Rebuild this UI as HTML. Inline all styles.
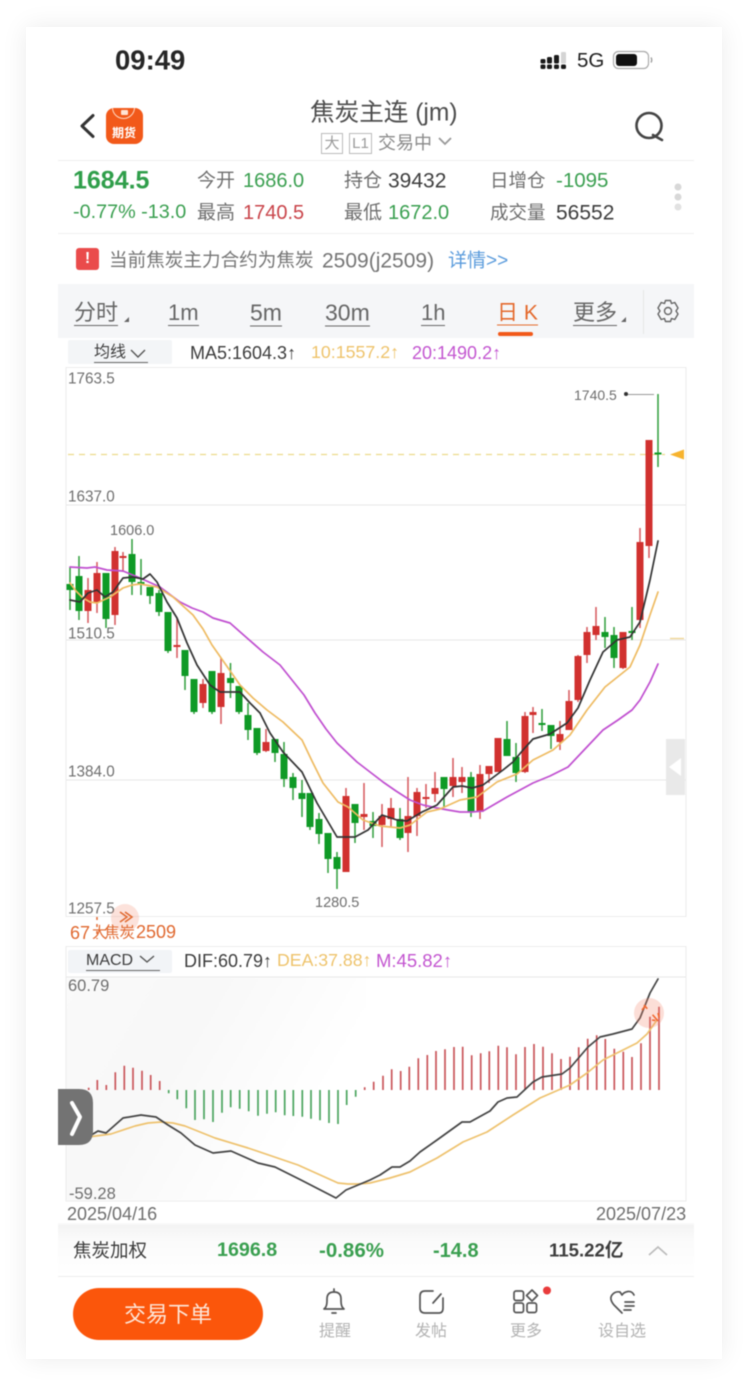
<!DOCTYPE html>
<html lang="zh">
<head>
<meta charset="utf-8">
<title>焦炭主连</title>
<style>
html,body{margin:0;padding:0;background:#fff}
body{width:748px;height:1385px;position:relative;overflow:hidden;font-family:"Liberation Sans","Noto Sans CJK SC",sans-serif;color:#444}
#card{position:absolute;left:26px;top:27px;width:696px;height:1332px;background:#fff;box-shadow:0 0 24px rgba(0,0,0,.08)}
#app{position:absolute;left:0;top:0;width:748px;height:1385px;filter:blur(.45px)}
.t{position:absolute;white-space:nowrap;line-height:1;transform:translateY(calc(-50% + 1px))}
.b{position:absolute}
.g{color:#3a9f50}.r{color:#c9444a}.k{color:#3d3d3d}.y{color:#eec36b}.p{color:#c355d0}.o{color:#e0682f}.m{color:#6e6e6e}
.u{border-bottom:1.5px solid #666;padding-bottom:1px;top:313px}
svg{position:absolute;left:0;top:0}
</style>
</head>
<body>
<div id="card"></div>
<div id="app">
<!-- backgrounds -->
<div class="b" style="left:58px;top:284px;width:636px;height:54px;background:#f5f6f8"></div>
<div class="b" style="left:58px;top:160px;width:636px;height:1px;background:#eeeeee"></div>
<div class="b" style="left:58px;top:233px;width:636px;height:1px;background:#f0f0f0"></div>
<div class="b" style="left:643px;top:290px;width:1px;height:44px;background:#e6e6e6"></div>
<div class="b" style="left:68px;top:340px;width:104px;height:24px;background:#f3f5f7;border-radius:2px"></div>
<div class="b" style="left:68px;top:950px;width:104px;height:23px;background:#f2f4f7;border-radius:2px"></div>
<div class="b" style="left:66px;top:978px;width:300px;height:222px;background:linear-gradient(120deg,#fafafa,#f8f8f8 35%,#fff 75%)"></div>
<div class="b" style="left:58px;top:1226px;width:636px;height:50px;background:linear-gradient(#f4f4f4,#fbfbfb 30%,#fff)"></div>
<div class="b" style="left:58px;top:1276px;width:636px;height:1px;background:#ededed"></div>
<div class="b" style="left:58px;top:1222px;width:636px;height:4px;background:linear-gradient(rgba(0,0,0,0),rgba(0,0,0,.05))"></div>

<!-- status bar -->
<span class="t" style="left:115px;top:59px;font-size:27.5px;font-weight:700;color:#262626">09:49</span>
<span class="t" style="left:577px;top:60px;font-size:20.5px;color:#222">5G</span>

<!-- header -->
<span class="t" style="left:310px;top:113px;font-size:24.6px;color:#4d4d4d">焦炭主连 (jm)</span>
<span class="t" style="left:378px;top:142px;font-size:18px;color:#8a8a8a">交易中</span>
<span class="b" style="left:321px;top:133px;width:20px;height:19px;border:1px solid #bbb;font-size:15px;line-height:19px;text-align:center;color:#999">大</span>
<span class="b" style="left:349px;top:133px;width:21px;height:19px;border:1px solid #bbb;font-size:15px;line-height:19px;text-align:center;color:#999">L1</span>
<div class="b" style="left:106px;top:108px;width:37px;height:36px;border-radius:8px;background:#f2591a;overflow:hidden">
  <div class="b" style="left:6px;top:-12px;width:21px;height:21px;border:1.5px solid #ffd9c4;border-radius:50%"></div>
  <div class="b" style="left:15px;top:2px;width:7px;height:5px;background:#ffe3d4;border-radius:1px"></div>
  <span class="t" style="left:6px;top:24px;font-size:12px;font-weight:700;color:#fff;letter-spacing:0">期货</span>
</div>

<!-- quote rows -->
<span class="t g" style="left:73px;top:179.500px;font-size:25px;font-weight:700;color:#2f9e4a">1684.5</span>
<span class="t m" style="left:197px;top:180px;font-size:19px">今开</span>
<span class="t g" style="left:243px;top:180px;font-size:20px">1686.0</span>
<span class="t m" style="left:344px;top:180px;font-size:19px">持仓</span>
<span class="t k" style="left:388px;top:180px;font-size:21px">39432</span>
<span class="t m" style="left:490px;top:180px;font-size:18.500px">日增仓</span>
<span class="t g" style="left:556px;top:180px;font-size:20.500px">-1095</span>
<span class="t g" style="left:73px;top:212px;font-size:19.800px">-0.77% -13.0</span>
<span class="t m" style="left:197px;top:212px;font-size:19px">最高</span>
<span class="t r" style="left:243px;top:212px;font-size:20px">1740.5</span>
<span class="t m" style="left:344px;top:212px;font-size:19px">最低</span>
<span class="t g" style="left:388px;top:212px;font-size:20px">1672.0</span>
<span class="t m" style="left:490px;top:212px;font-size:18.500px">成交量</span>
<span class="t k" style="left:556px;top:212px;font-size:21px">56552</span>

<!-- notice -->
<div class="b" style="left:76px;top:248px;width:23px;height:22px;background:#ea4b4b;border-radius:3px;color:#fff;font-size:16px;font-weight:700;line-height:22px;text-align:center">!</div>
<span class="t" style="left:109px;top:259.500px;font-size:18.600px;color:#757575">当前焦炭主力合约为焦炭</span>
<span class="t" style="left:322px;top:259.500px;font-size:21px;color:#757575">2509(j2509)</span>
<span class="t" style="left:448px;top:259.500px;font-size:19px;color:#5a9bdc">详情&gt;&gt;</span>

<!-- tabs -->
<span class="t m u" style="left:74px;font-size:22px;color:#666">分时</span>
<span class="t m u" style="left:168px;font-size:22px;color:#666">1m</span>
<span class="t m u" style="left:250px;font-size:23px;color:#666">5m</span>
<span class="t m u" style="left:325px;font-size:23px;color:#666">30m</span>
<span class="t m u" style="left:421px;font-size:22px;color:#666">1h</span>
<span class="t u" style="left:497px;font-size:21px;color:#e4692c;border-color:#e4692c">日 K</span>
<span class="t m u" style="left:573px;font-size:22px;color:#666">更多</span>
<div class="b" style="left:498px;top:332px;width:35px;height:4px;border-radius:2px;background:#f2591a"></div>

<!-- legend -->
<span class="t k u" style="left:94px;top:353px;font-size:16px;border-width:1px;padding-bottom:1px">均线&nbsp;&nbsp;&nbsp;&nbsp;&nbsp;</span>
<span class="t k" style="left:190px;top:352px;font-size:18px">MA5:1604.3↑</span>
<span class="t y" style="left:311px;top:352px;font-size:17.800px">10:1557.2↑</span>
<span class="t p" style="left:412px;top:352px;font-size:18px">20:1490.2↑</span>

<!-- chart labels -->
<span class="t m" style="left:68px;top:378px;font-size:15.300px">1763.5</span>
<span class="t m" style="left:68px;top:496px;font-size:15.300px">1637.0</span>
<span class="t m" style="left:68px;top:633px;font-size:15.300px">1510.5</span>
<span class="t m" style="left:68px;top:771px;font-size:15.300px">1384.0</span>
<span class="t m" style="left:68px;top:908px;font-size:15.300px">1257.5</span>
<span class="t m" style="left:110px;top:530px;font-size:14.500px">1606.0</span>
<span class="t m" style="left:315px;top:902px;font-size:14.500px">1280.5</span>
<span class="t m" style="left:574px;top:394px;font-size:14px">1740.5</span>

<!-- main chart and icons -->
<svg width="748" height="1385" viewBox="0 0 748 1385" fill="none">
  <!-- status icons -->
  <g fill="#1a1a1a">
    <rect x="540.500" y="59" width="5" height="4.500" rx="1.500"/><rect x="540.500" y="64.500" width="5" height="4.500" rx="1.500"/>
    <rect x="547" y="57" width="5" height="6.500" rx="1.500"/><rect x="547" y="64.500" width="5" height="4.500" rx="1.500"/>
    <rect x="554" y="55" width="5" height="8.500" rx="1.500"/><rect x="554" y="64.500" width="5" height="4.500" rx="1.500"/>
    <rect x="561" y="64.500" width="5" height="4.500" rx="1.500"/>
  </g>
  <rect x="561" y="52" width="5" height="11.500" rx="1" fill="#d4d4d4"/>
  <rect x="613.500" y="51.500" width="35" height="17" rx="5" stroke="#aaa" stroke-width="1.200"/>
  <rect x="616" y="54" width="21" height="12" rx="3" fill="#111"/>
  <path d="M651 57.500q1.500 2.500 0 5" stroke="#999" stroke-width="1.300"/>
  <!-- header icons -->
  <path d="M93 115.500L82 126l11 10.500" stroke="#333" stroke-width="3" stroke-linejoin="round" stroke-linecap="round"/>
  <circle cx="649" cy="125.500" r="12.500" stroke="#444" stroke-width="2.600"/>
  <path d="M653 135l9 5" stroke="#444" stroke-width="2.600" stroke-linecap="round"/>
  <path d="M439 138l6 6 6-6" stroke="#999" stroke-width="1.800"/>
  <!-- quote dots -->
  <circle cx="678" cy="187" r="3.500" fill="#d8d8d8"/><circle cx="678" cy="197" r="3.500" fill="#d8d8d8"/><circle cx="678" cy="207" r="3.500" fill="#e2e2e2"/>
  <!-- tab marks -->
  <path d="M124 322l5-5v5zM621 322l5-5v5z" fill="#666"/>
  <g transform="translate(668 311)" stroke="#666" stroke-width="1.400" stroke-linejoin="round">
    <path d="M-2.500-10.500H2.500L3.500-7.500L6.800-8.500L10-3L8 0L10 3L6.800 8.500L3.500 7.500L2.500 10.500H-2.500L-3.500 7.500L-6.800 8.500L-10 3L-8 0L-10-3L-6.800-8.500L-3.500-7.500Z"/>
    <circle r="3.500"/>
  </g>
  <path d="M131 350l7 7 7-7" stroke="#555" stroke-width="1.400"/>
  <path d="M140 956l7 6 7-6" stroke="#555" stroke-width="1.400"/>
  <!-- frames -->
  <rect x="66" y="367.500" width="620" height="549" stroke="#ececec"/>
  <rect x="66" y="946.500" width="620" height="254.500" stroke="#ececec"/>
  <path d="M66 505H686M66 640H686M66 780H686M66 977H686" stroke="#e6e6e6"/>
  <path d="M68 454.500H665" stroke="#ecd98a" stroke-width="1.200" stroke-dasharray="6 5"/>
  <path d="M670 454.500l14-5v10z" fill="#f7b32e"/>
  <path d="M670 638.500h14" stroke="#eed28f" stroke-width="1.300"/>
  <path d="M626 394.500h28" stroke="#999" stroke-width="1"/><circle cx="626" cy="394" r="2" fill="#333"/>
  <!-- wicks green -->
  <path stroke="#2f9e3a" stroke-width="1.500" d="M70 567V610M79 556V620M106 573V628M132 539V595M141 559V595M150 587V604M159 590V616M168 612V653M185 650V690M194 679V714M212 671V714M230.500 663V698M239 686V714M248 703V740M257 728V755M275 739V762M284 742V787M293 773V800M302 780V817M310 793V830M319 813V844M328 833V873M337 852V889M355 804V843M373 812V838M400 808V840M444 777V808M471 772V817M507 721V756M516 743V782M542 709V731M551 725V749M605 617V648M614 627V668M632 607V640M658 394V467"/>
  <!-- wicks red -->
  <path stroke="#d5565b" stroke-width="1.500" d="M88 578V623M97 562V613M115 547V625M123 552V572M177 618V658M203 679V708M221 658V724M266 729V752M346 788V872M364 783V830M382 804V847M391 798V827M408 777V852M417 788V836M426 784V808M435 772V802M453 758V797M462 767V793M480 765V819M489 766V783M525 712V773M533 707V733M560 721V750M569 690V730M578 655V702M587 627V663M596 607V640M623 632V669M640 528V628M649 440V558"/>
  <!-- bodies green -->
  <path stroke="#0f9a26" stroke-width="7" d="M70 584V590M79 576V611M106 573V619M132 554V582M141 582V585M150 587V596M159 593V612M168 612V651M185 650V676M194 679V712M212 671V712M230.500 678V683M239 686V712M248 715V730M257 728V753M275 739V753M284 754V779M293 777V788M302 793V799M310 793V827M319 819V834M328 833V859M337 857V869M355 804V823M373 821V826M400 819V838M444 777V789M471 777V812M507 739V756M516 757V773M542 723V725M551 725V736M605 632V637M614 635V658M632 631V633M658 452.500V454.500"/>
  <!-- bodies red -->
  <path stroke="#d1312f" stroke-width="7" d="M88 590V611M97 573V602M115 551V615M123 556V558M177 645V647M203 684V703M221 673V707M266 742V751M346 796V872M364 814V817M382 816V825M391 808V819M408 816V833M417 792V816M426 797V799M435 788V794M453 777V786M462 777V782M480 774V812M489 766V774M498 738V772M525 716V772M533 712V715M560 734V742M569 701V730M578 656V700M587 632V655M596 626V635M623 632V668M640 542V620M649 440V546"/>
  <!-- MA lines -->
  <g stroke-width="1.700" stroke-linejoin="round" stroke-linecap="round">
    <polyline stroke="#c04fd0" points="70,567 87,568 95,567 107,570 123,571 140,578 160,587 180,602 192,608 203,612 213,618 230,623 247,638 263,652 280,665 292,680 304,695 315,713 326,729 337,743 357,762 370,772 383,782 396,791 410,800 423,805 437,808 448,810 460,812 472,812 483,811 495,804 507,797 520,790 533,783 550,776 568,767 585,749 603,730 618,720 632,710 640,700 650,682 658,664"/>
    <polyline stroke="#eebb62" points="70,583 76,591 83,598 90,602 97,603 110,597 123,588 132,585 140,584 157,587 173,597 193,615 203,629 212,645 226,665 240,685 253,698 267,710 283,722 302,740 312,761 323,783 338,802 348,807 363,820 380,826 400,828 410,825 427,812 440,809 460,800 477,797 497,782 517,774 533,760 553,750 570,735 587,710 605,687 630,667 640,645 650,615 658,592"/>
    <polyline stroke="#333" points="70,600 80,602 88,593 97,590 105,597 113,592 123,578 133,577 143,579 150,574 157,582 167,602 177,618 187,643 197,665 210,685 220,692 240,692 250,703 260,713 270,733 283,752 302,772 317,803 337,837 355,837 368,830 382,815 397,820 407,821 422,812 437,805 453,787 462,786 472,788 483,785 503,770 513,762 523,750 533,739 550,734 567,723 578,708 590,680 603,652 617,640 630,637 640,622 650,580 658,541"/>
  </g>
  <!-- side handle -->
  <rect x="666" y="739" width="19" height="56" fill="#e9e9e9"/>
  <path d="M669 767l12-9v18z" fill="#fff"/>
  <!-- MACD bars -->
  <path stroke="#c9555a" stroke-width="1.700" d="M88.700 1090V1087.700M97.300 1090V1080M106.300 1090V1085M115.300 1090V1072.300M124.300 1090V1065.700M133 1090V1067.700M142 1090V1070.700M150.700 1090V1075M159.700 1090V1081M364.700 1090V1087.300M373.700 1090V1081.700M383 1090V1075.700M391.700 1090V1069.300M400.700 1090V1071M409.300 1090V1066.700M418.300 1090V1058.300M427.300 1090V1055M436 1090V1051M445 1090V1049.300M454 1090V1047M462.700 1090V1046.700M471.700 1090V1055.300M480.700 1090V1053.300M489.300 1090V1051.300M498.300 1090V1045.700M507 1090V1047.300M516 1090V1054.300M525 1090V1047M534 1090V1044M543 1090V1046.700M552 1090V1053.300M561 1090V1059M570 1090V1056.700M578.700 1090V1047.300M587.700 1090V1038.700M596.700 1090V1035.300M605.300 1090V1039M614.300 1090V1048.700M623.300 1090V1051.700M632 1090V1057M641 1090V1043.300M650 1090V1016.700M659 1090V1006.700"/>
  <path stroke="#4aa45e" stroke-width="1.700" d="M168.700 1090V1093.300M177.300 1090V1099.300M186.300 1090V1108.300M195 1090V1120M204 1090V1119.300M213 1090V1122M222 1090V1112.700M230.700 1090V1107.300M239.700 1090V1108.700M248.700 1090V1111.300M258 1090V1115.700M267 1090V1113.700M275.700 1090V1112.300M284.700 1090V1115.300M293.300 1090V1116M302.300 1090V1116.700M311 1090V1118.700M320 1090V1120.300M329 1090V1123M338 1090V1124M346.700 1090V1105M355.700 1090V1096.700"/>
  <!-- MACD lines -->
  <g stroke-width="1.700" stroke-linejoin="round" stroke-linecap="round">
    <polyline stroke="#eec26e" points="88,1137 111,1134 135,1126 148,1123 161,1122 173,1123 185,1126 215,1138 248,1148 298,1165 338,1183 348,1184 358,1184 370,1183 390,1178 410,1172 437,1158 463,1142 487,1132 513,1115 540,1098 570,1085 587,1073 603,1060 637,1043 647,1034 657,1020"/>
    <polyline stroke="#444" points="88,1137 98,1131 106,1133 123,1118 141,1115 156,1117 168,1125 181,1133 195,1145 213,1153 231,1151 258,1163 275,1167 301,1180 336,1198 346,1190 370,1180 380,1175 392,1167 400,1167 410,1161 420,1152 437,1140 462,1122 470,1122 490,1111 498,1102 507,1098 517,1097 533,1082 542,1077 562,1074 570,1068 588,1047 600,1037 613,1034 632,1029 640,1018 650,993 658,979"/>
  </g>
  <!-- floating hints -->
  <circle cx="649" cy="1013" r="15" fill="#f58a6e" fill-opacity=".28"/>
  <path d="M642 1010l4-5 4 1M658 1013l2 8-8-1M644 1005l14 16" stroke="#f2662e" stroke-width="1.600" stroke-dasharray="5 8 30"/>
  <circle cx="125" cy="918" r="14" fill="#f58a6e" fill-opacity=".25"/>
  <path d="M120 912l7 5-7 5M125 912l7 5-7 5" stroke="#e0682f" stroke-width="1.500"/>
  <path d="M97 917v22" stroke="#e0682f" stroke-width="1.500" stroke-dasharray="3 4"/>
  <!-- left handle -->
  <path d="M58 1089h21q14 0 14 14v28q0 14-14 14H58z" fill="#737373"/>
  <path d="M72 1103l8 14-8 17" stroke="#fff" stroke-width="4" stroke-linecap="round" stroke-linejoin="round"/>
  <!-- footer chevron -->
  <path d="M649 1255l9-8 9 8" stroke="#bbb" stroke-width="1.600"/>
  <!-- toolbar icons -->
  <g stroke="#555" stroke-width="1.700" stroke-linejoin="round" stroke-linecap="round">
    <path d="M324 1309q3-2 3-8v-2q0-7 7-7t7 7v2q0 6 3 8z"/>
    <path d="M334 1289v3M332 1313h4"/>
    <path d="M433 1291h-8q-5 0-5 5v12q0 5 5 5h14q4 0 4-5v-10"/>
    <path d="M433 1303l8-9"/>
    <rect x="514" y="1291" width="9.500" height="9.500" rx="2"/><rect x="514" y="1303" width="9.500" height="9.500" rx="2"/><rect x="527" y="1303" width="9.500" height="9.500" rx="2"/>
    <path d="M532 1290l5.500 5.500-5.500 5.500-5.500-5.500z"/>
    <path d="M622 1313l-8-8q-5-6-2-10t8-3l2 3q2-3 6-3.500t6 3.500"/>
    <path d="M625 1302h9M625 1306h9M624 1310h7"/>
  </g>
  <circle cx="547" cy="1290.500" r="4" fill="#e93b3b"/>
</svg>

<!-- mid rows -->
<span class="t" style="left:70px;top:932px;font-size:18px;color:#e0682f">67</span>
<span class="t" style="left:92px;top:932px;font-size:15px;color:#e0682f">大</span>
<span class="t" style="left:104px;top:932px;font-size:15.500px;color:#e0682f">焦炭</span>
<span class="t" style="left:136px;top:931px;font-size:18px;color:#e0682f">2509</span>
<span class="t k u" style="left:86px;top:961px;font-size:16px;border-width:1px;padding-bottom:1px">MACD&nbsp;&nbsp;&nbsp;&nbsp;&nbsp;&nbsp;</span>
<span class="t k" style="left:184px;top:960px;font-size:18px">DIF:60.79↑</span>
<span class="t y" style="left:277px;top:960px;font-size:17.700px">DEA:37.88↑</span>
<span class="t p" style="left:376px;top:960px;font-size:18.500px">M:45.82↑</span>
<span class="t m" style="left:68px;top:985px;font-size:16.500px">60.79</span>
<span class="t m" style="left:69px;top:1193px;font-size:16.500px">-59.28</span>
<span class="t m" style="left:67px;top:1213px;font-size:18px">2025/04/16</span>
<span class="t m" style="left:596px;top:1213px;font-size:18px">2025/07/23</span>

<!-- footer quote -->
<span class="t k" style="left:73px;top:1250px;font-size:18.500px">焦炭加权</span>
<span class="t g" style="left:217px;top:1250px;font-size:19.700px;font-weight:700;color:#3a9f50">1696.8</span>
<span class="t g" style="left:319px;top:1250px;font-size:20.500px;font-weight:700;color:#3a9f50">-0.86%</span>
<span class="t g" style="left:433px;top:1250px;font-size:20px;font-weight:700;color:#3a9f50">-14.8</span>
<span class="t k" style="left:549px;top:1250px;font-size:18.600px;font-weight:700">115.22亿</span>

<!-- bottom bar -->
<div class="b" style="left:73px;top:1288px;width:190px;height:52px;border-radius:26px;background:#fb560b;text-align:center;line-height:53px;font-size:22px;color:#fde6d8">交易下单</div>
<span class="t" style="left:319px;top:1331px;font-size:16px;color:#b3b3b3">提醒</span>
<span class="t" style="left:415px;top:1331px;font-size:16px;color:#b3b3b3">发帖</span>
<span class="t" style="left:510px;top:1331px;font-size:16px;color:#b3b3b3">更多</span>
<span class="t" style="left:598px;top:1331px;font-size:16px;color:#b3b3b3">设自选</span>
</div>
</body>
</html>
